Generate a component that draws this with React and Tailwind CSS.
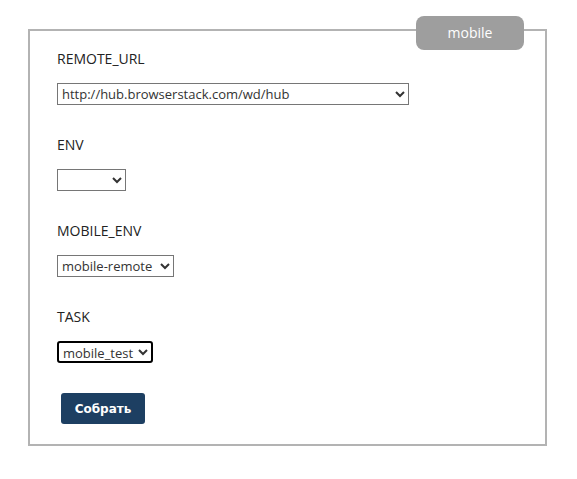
import React from 'react';

const Field = ({ label, width, value, options, focused }) => (
  <div className="flex flex-col">
    <label className="h-5 text-[14px] leading-5 text-[#222]">{label}</label>
    <select
      className={
        'mt-[14px] h-[22px] text-[13px] leading-4 text-[#333] bg-white ' +
        (focused
          ? 'border-2 border-black rounded-[3px] outline-none'
          : 'border border-[#767676]')
      }
      style={{ width }}
      defaultValue={value}
    >
      {options.map((o) => (
        <option key={o} value={o}>
          {o}
        </option>
      ))}
    </select>
  </div>
);

export default function App() {
  return (
    <div className="w-[577px] h-[479px] bg-white font-['Open_Sans',sans-serif] pt-[29px] pl-[28px]">
      <div className="relative w-[519px] h-[417px] border-2 border-[#b3b3b3] pl-[27px] pt-[18px]">
        <div className="absolute right-[21px] -top-[15px] w-[108px] h-[34px] rounded-lg bg-[#9e9e9e] text-white text-[14px] flex items-center justify-center pb-[2px]">
          mobile
        </div>
        <div className="flex flex-col gap-[30px]">
          <Field
            label="REMOTE_URL"
            width="352px"
            value="http://hub.browserstack.com/wd/hub"
            options={['http://hub.browserstack.com/wd/hub']}
          />
          <Field label="ENV" width="69px" value="" options={['']} />
          <Field label="MOBILE_ENV" width="117px" value="mobile-remote" options={['mobile-remote']} />
          <Field label="TASK" width="96px" value="mobile_test" options={['mobile_test']} focused />
        </div>
        <button className="mt-[30px] ml-[4px] w-[84px] h-[31px] rounded-[3px] bg-[#1d3f62] text-white text-[12px] font-bold font-['DejaVu_Sans',sans-serif]">
          Собрать
        </button>
      </div>
    </div>
  );
}
